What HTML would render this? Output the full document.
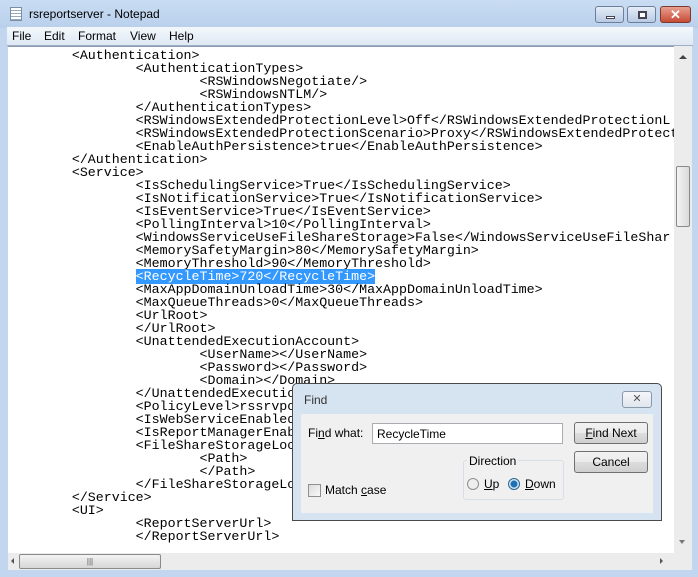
<!DOCTYPE html>
<html><head><meta charset="utf-8"><style>
*{margin:0;padding:0;box-sizing:border-box}
body{width:698px;height:577px;overflow:hidden;background:#c2d7ef;font-family:"Liberation Sans",sans-serif;position:relative}
.abs{position:absolute}
#title{left:0;top:0;width:698px;height:28px;background:linear-gradient(#c9dcf2,#b9d0ec)}
#menu{left:7px;top:27px;width:686px;height:19px;background:linear-gradient(#f4f8fc,#dfe8f4);border-bottom:1px solid #a0b0c4;font-size:12px}
#menu span{position:absolute;top:2px}
#text{left:8px;top:46px;width:666px;height:507px;background:#fff;overflow:hidden;border-top:1px solid #8b9bb0}
pre{position:absolute;left:0;top:2px;font-family:"Liberation Mono",monospace;font-size:13.3px;line-height:13px;color:#000;white-space:pre}
.hl{background:#3399ff;color:#fff}
#vs{left:674px;top:46px;width:18px;height:507px;background:#ececec}
#hs{left:8px;top:553px;width:666px;height:17px;background:#ececec}
.btn{position:absolute;border:1px solid #707070;border-radius:3px;background:linear-gradient(#f2f2f2,#ebebeb 50%,#dddddd 51%,#cfcfcf);font-size:12px;text-align:center;line-height:20px}
</style></head><body>
<div id="title" class="abs"></div>
<div class="abs" style="left:10px;top:7px;width:12px;height:14px;background:#fff;border:1px solid #7a8ea8;background:repeating-linear-gradient(#fff 0 2px,#9ab 2px 3px)"></div>
<div class="abs" style="left:29px;top:7px;font-size:12px;color:#000">rsreportserver - Notepad</div>
<div class="abs" style="left:595px;top:6px;width:29px;height:17px;border:1px solid #6b7f9c;border-radius:3px;background:linear-gradient(#e4ecf6,#b8cbe4)"><div class="abs" style="left:10px;top:9px;width:9px;height:3px;background:#fff;border:1px solid #445"></div></div>
<div class="abs" style="left:627px;top:6px;width:29px;height:17px;border:1px solid #6b7f9c;border-radius:3px;background:linear-gradient(#e4ecf6,#b8cbe4)"><div class="abs" style="left:10px;top:4px;width:9px;height:8px;border:2px solid #445;background:#fff"></div></div>
<div class="abs" style="left:660px;top:6px;width:31px;height:17px;border:1px solid #7a3a30;border-radius:3px;background:linear-gradient(#e8a090,#c84b35);color:#fff;font-size:13px;font-weight:bold;text-align:center;line-height:15px">✕</div>
<div id="menu" class="abs"><span style="left:5px">File</span><span style="left:37px">Edit</span><span style="left:71px">Format</span><span style="left:123px">View</span><span style="left:162px">Help</span></div>
<div id="text" class="abs"><pre>        &lt;Authentication&gt;
                &lt;AuthenticationTypes&gt;
                        &lt;RSWindowsNegotiate/&gt;
                        &lt;RSWindowsNTLM/&gt;
                &lt;/AuthenticationTypes&gt;
                &lt;RSWindowsExtendedProtectionLevel&gt;Off&lt;/RSWindowsExtendedProtectionL
                &lt;RSWindowsExtendedProtectionScenario&gt;Proxy&lt;/RSWindowsExtendedProtect
                &lt;EnableAuthPersistence&gt;true&lt;/EnableAuthPersistence&gt;
        &lt;/Authentication&gt;
        &lt;Service&gt;
                &lt;IsSchedulingService&gt;True&lt;/IsSchedulingService&gt;
                &lt;IsNotificationService&gt;True&lt;/IsNotificationService&gt;
                &lt;IsEventService&gt;True&lt;/IsEventService&gt;
                &lt;PollingInterval&gt;10&lt;/PollingInterval&gt;
                &lt;WindowsServiceUseFileShareStorage&gt;False&lt;/WindowsServiceUseFileShar
                &lt;MemorySafetyMargin&gt;80&lt;/MemorySafetyMargin&gt;
                &lt;MemoryThreshold&gt;90&lt;/MemoryThreshold&gt;
                <span class="hl">&lt;RecycleTime&gt;720&lt;/RecycleTime&gt;</span>
                &lt;MaxAppDomainUnloadTime&gt;30&lt;/MaxAppDomainUnloadTime&gt;
                &lt;MaxQueueThreads&gt;0&lt;/MaxQueueThreads&gt;
                &lt;UrlRoot&gt;
                &lt;/UrlRoot&gt;
                &lt;UnattendedExecutionAccount&gt;
                        &lt;UserName&gt;&lt;/UserName&gt;
                        &lt;Password&gt;&lt;/Password&gt;
                        &lt;Domain&gt;&lt;/Domain&gt;
                &lt;/UnattendedExecutionAccount&gt;
                &lt;PolicyLevel&gt;rssrvpolicy.config&lt;/PolicyLevel&gt;
                &lt;IsWebServiceEnabled&gt;True&lt;/IsWebServiceEnabled&gt;
                &lt;IsReportManagerEnabled&gt;True&lt;/IsReportManagerEnabled&gt;
                &lt;FileShareStorageLocation&gt;
                        &lt;Path&gt;
                        &lt;/Path&gt;
                &lt;/FileShareStorageLocation&gt;
        &lt;/Service&gt;
        &lt;UI&gt;
                &lt;ReportServerUrl&gt;
                &lt;/ReportServerUrl&gt;</pre></div>
<div id="vs" class="abs">
  <div class="abs" style="left:5px;top:9px;width:0;height:0;border-left:4px solid transparent;border-right:4px solid transparent;border-bottom:4px solid #444"></div>
  <div class="abs" style="left:2px;top:120px;width:14px;height:61px;border:1px solid #8a8a8a;border-radius:2px;background:linear-gradient(90deg,#f3f3f3,#dadada)"></div>
  <div class="abs" style="left:5px;top:494px;width:0;height:0;border-left:3px solid transparent;border-right:3px solid transparent;border-top:4px solid #777"></div>
</div>
<div id="hs" class="abs">
  <div class="abs" style="left:3px;top:5px;width:0;height:0;border-top:3px solid transparent;border-bottom:3px solid transparent;border-right:3px solid #555"></div>
  <div class="abs" style="left:11px;top:1px;width:142px;height:15px;border:1px solid #8a8a8a;border-radius:2px;background:linear-gradient(#f3f3f3,#d6d6d6);font-size:8px;text-align:center;line-height:13px;color:#555">|||</div>
  <div class="abs" style="left:652px;top:5px;width:0;height:0;border-top:3px solid transparent;border-bottom:3px solid transparent;border-left:3px solid #555"></div>
</div>
<div class="abs" style="left:674px;top:553px;width:18px;height:17px;background:#ececec"></div>
<div class="abs" style="left:292px;top:383px;width:370px;height:138px;background:#d6e3f1;border:1px solid #4a4a4a;border-radius:5px 5px 0 0">
  <div class="abs" style="left:11px;top:9px;font-size:12px;color:#333">Find</div>
  <div class="abs" style="left:329px;top:7px;width:30px;height:17px;border:1px solid #8a98ac;border-radius:3px;background:linear-gradient(#f4f6f9,#dfe6ee);font-size:11px;text-align:center;line-height:15px;color:#555">✕</div>
  <div class="abs" style="left:8px;top:30px;width:352px;height:99px;background:#f0f0f0">
    <div class="abs" style="left:7px;top:12px;font-size:12px">Fi<u>n</u>d what:</div>
    <div class="abs" style="left:71px;top:9px;width:191px;height:21px;background:#fff;border:1px solid #abadb3;font-size:12px;padding:3px 0 0 4px">RecycleTime</div>
    <div class="btn" style="left:273px;top:8px;width:74px;height:22px"><u>F</u>ind Next</div>
    <div class="btn" style="left:273px;top:37px;width:74px;height:22px">Cancel</div>
    <div class="abs" style="left:162px;top:46px;width:101px;height:40px;border:1px solid #d5dfe5;border-radius:3px"></div>
    <div class="abs" style="left:166px;top:40px;font-size:12px;background:#f0f0f0;padding:0 2px">Direction</div>
    <div class="abs" style="left:166px;top:64px;width:12px;height:12px;border:1px solid #8e8f8f;border-radius:50%;background:#eee"></div>
    <div class="abs" style="left:183px;top:63px;font-size:12px"><u>U</u>p</div>
    <div class="abs" style="left:207px;top:64px;width:12px;height:12px;border:1px solid #2c628b;border-radius:50%;background:radial-gradient(#1e6fb4 0 3px,#d9ecf8 4px)"></div>
    <div class="abs" style="left:224px;top:63px;font-size:12px"><u>D</u>own</div>
    <div class="abs" style="left:7px;top:70px;width:13px;height:13px;border:1px solid #8e8f8f;background:linear-gradient(135deg,#dcdcdc,#f8f8f8)"></div>
    <div class="abs" style="left:24px;top:69px;font-size:12px">Match <u>c</u>ase</div>
  </div>
</div>
</body></html>
